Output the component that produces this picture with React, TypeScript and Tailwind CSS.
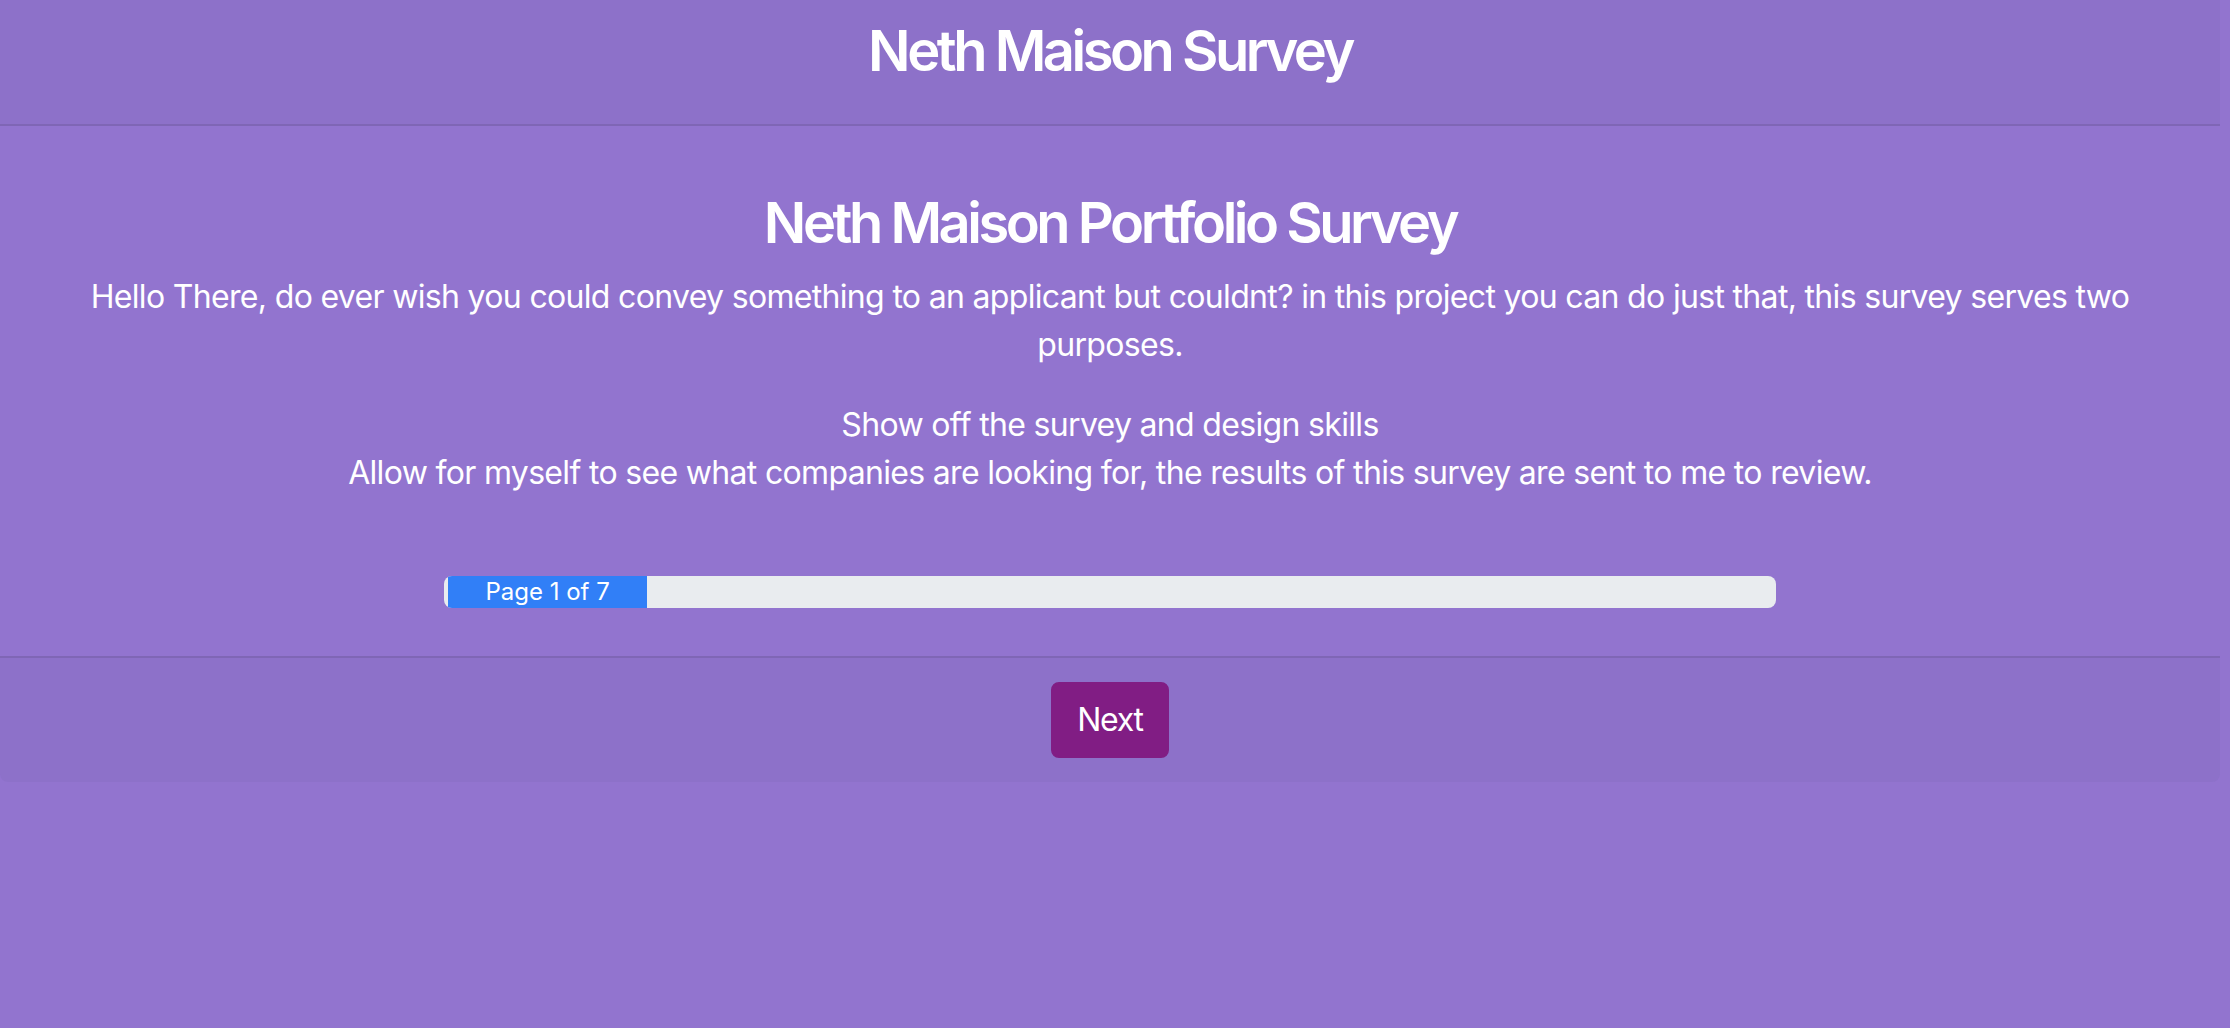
export default function App() {
  return (
    <div className="min-h-screen bg-[#9274cf] font-['Inter','Liberation_Sans',sans-serif] text-white">
      <div className="mr-[10px] rounded-b-lg">
        <header className="h-[126px] border-b-2 border-[#7f66b5] bg-[#8d71c9] pt-[18px] text-center">
          <h1 className="text-[56px] font-semibold leading-[1.2] tracking-[-0.062em]">
            Neth Maison Survey
          </h1>
        </header>

        <section className="pt-16 pb-12 text-center">
          <div className="px-10">
            <h2 className="mb-4 text-[56px] font-semibold leading-[1.2] tracking-[-0.062em]">
              Neth Maison Portfolio Survey
            </h2>
            <p className="mb-8 text-[32px] leading-[48px] tracking-[-0.021em]">
              Hello There, do ever wish you could convey something to an applicant but couldnt? in
              this project you can do just that, this survey serves two purposes.
            </p>
            <p className="text-[32px] leading-[48px] tracking-[-0.021em]">
              Show off the survey and design skills
              <br />
              Allow for myself to see what companies are looking for, the results of this survey
              are sent to me to review.
            </p>
          </div>

          <div className="mx-auto mt-[79px] flex h-8 w-3/5 overflow-hidden rounded-lg bg-[#e9ecef] pl-1">
            <div className="flex w-[15%] items-center justify-center bg-[#317ff7] text-[24px] leading-none">
              Page 1 of 7
            </div>
          </div>
        </section>

        <footer className="flex justify-center rounded-b-lg border-t-2 border-[#7f66b5] bg-[#8d71c9] py-6">
          <button
            type="button"
            className="rounded-lg border-2 border-[#811d84] bg-[#811d84] px-6 py-3 text-[32px] leading-[48px] tracking-[-0.04em] text-white"
          >
            Next
          </button>
        </footer>
      </div>
    </div>
  );
}
